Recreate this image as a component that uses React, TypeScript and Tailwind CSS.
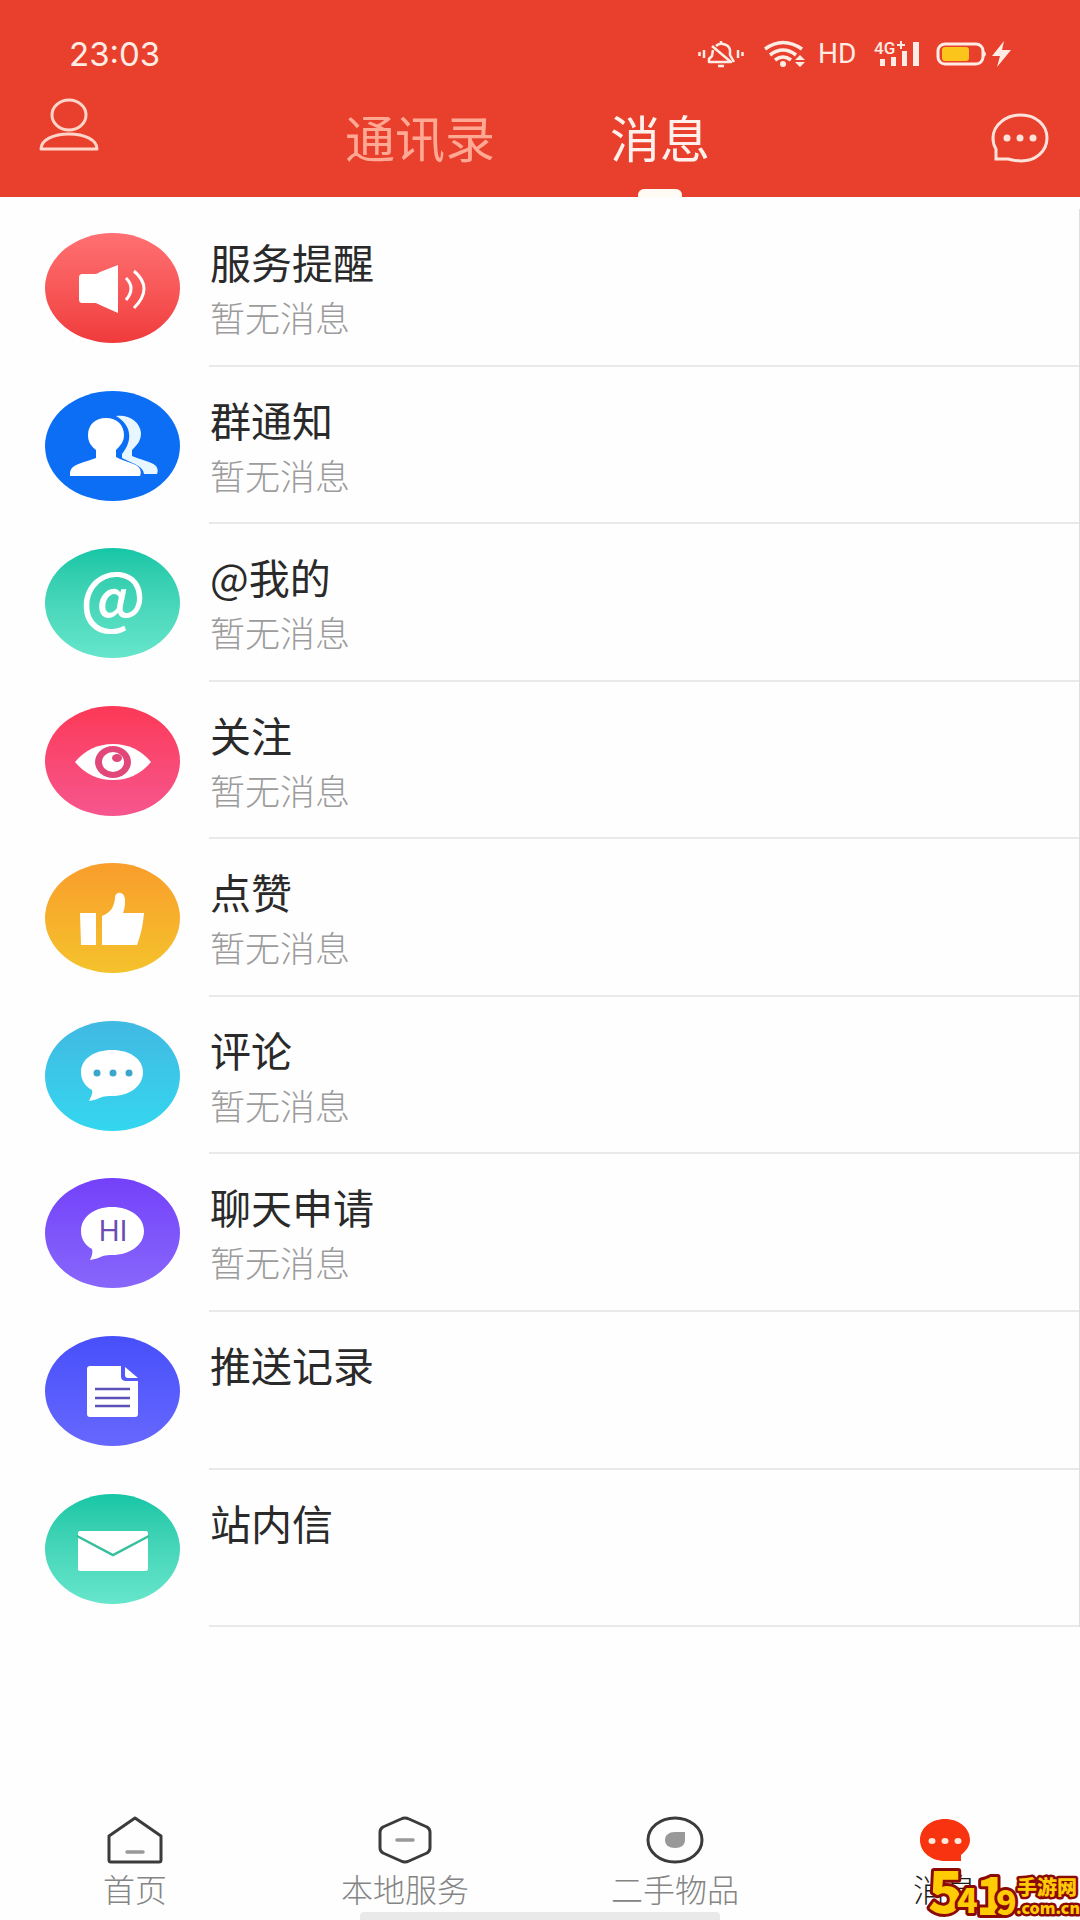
import type { ReactNode } from "react"

const EMPTY = "暂无消息"

const messages = [
  {
    title: "服务提醒",
    note: EMPTY,
    color: "from-[#ff7072] to-[#f03a3c]",
    visual: (
      <>
        <path d="M38 41h12c2 0 3-1 5-2l18-7v48l-18-8c-2-1-3-2-5-2H38c-3 0-4-1-4-4V45c0-3 1-4 4-4z" fill="white" />
        <path d="M81 45q10 10 0 22M89 38q20 17 0 37" fill="none" stroke="white" strokeWidth={3} />
      </>
    ),
  },
  {
    title: "群通知",
    note: EMPTY,
    color: "from-[#0c6ef5] to-[#0c6ef5]",
    visual: (
      <>
        <path d="M71 25c12-2 24 5 25 17 0 8-4 12-9 17v6c8 4 19 5 24 10 2 3 2 5 1 8h-13c-1-7-7-9-22-16v-4c11-13 10-29-6-38z" fill="#e8f6ff" />
        <path d="M61 27c11 0 18 7 18 17 0 7-4 11-8 15v7c9 5 21 6 24 12 1 3 1 5 0 7H25c0-4 0-6 3-9 5-4 13-5 23-9v-8c-5-4-8-8-8-15 0-10 7-17 18-17z" fill="white" />
      </>
    ),
  },
  {
    title: "@我的",
    note: EMPTY,
    color: "from-[#13c6a6] to-[#66e6cc]",
    visual: (
      <text x={68} y={74} textAnchor="middle" fontSize={68} fontWeight={500} fill="white">@</text>
    ),
  },
  {
    title: "关注",
    note: EMPTY,
    color: "from-[#fc3856] to-[#f6558e]",
    visual: (
      <>
        <path d="M30 56q15-18 38-18t38 18q-15 18-38 18T30 56z" fill="white" />
        <ellipse cx={68} cy={56} rx={18} ry={16} fill="#e2477a" />
        <ellipse cx={68} cy={56} rx={11} ry={10} fill="white" />
        <ellipse cx={72} cy={52} rx={5} ry={4} fill="#e2477a" />
      </>
    ),
  },
  {
    title: "点赞",
    note: EMPTY,
    color: "from-[#f99d2b] to-[#f4c22c]",
    visual: (
      <path d="M35 50h16v32H36zM57 82V53c8-3 12-8 13-18 0-7 9-7 10 1 0 5 0 9-2 14h21c-1 12-3 21-7 32z" fill="white" />
    ),
  },
  {
    title: "评论",
    note: EMPTY,
    color: "from-[#41b9e2] to-[#33d6f0]",
    visual: (
      <>
        <path d="M67 29c18 0 31 9 31 22 0 14-13 24-31 24-4 0-7 0-10 1-4 2-8 3-13 4 2-4 4-8 3-11-7-4-11-10-11-18 0-13 13-22 31-22z" fill="white" />
        <g fill="#3aa5cd">
          <circle cx={52} cy={52} r={3.5} />
          <circle cx={68} cy={52} r={3.5} />
          <circle cx={84} cy={52} r={3.5} />
        </g>
      </>
    ),
  },
  {
    title: "聊天申请",
    note: EMPTY,
    color: "from-[#7440fa] to-[#8866fb]",
    visual: (
      <>
        <path d="M67 29c18 0 32 10 32 24s-14 24-32 24c-3 0-6 0-9 1-4 2-8 3-13 4 2-4 3-8 2-11-7-4-11-10-11-18 0-14 13-24 31-24z" fill="white" />
        <text x={68} y={63} textAnchor="middle" fontSize={28} fontWeight={400} fill="#6d4bb5" className="font-['Inter',sans-serif]">HI</text>
      </>
    ),
  },
  {
    title: "推送记录",
    note: "",
    color: "from-[#474ffa] to-[#6767fd]",
    visual: (
      <>
        <path d="M45 30h31v10c0 4 2 5 6 5h11v33q0 3-3 3H45q-3 0-3-3V33q0-3 3-3z" fill="white" />
        <path d="M80 31l13 11H83q-3 0-3-3z" fill="white" />
        <path d="M50 53h35M50 62h35M50 70h35" stroke="#5a52b8" strokeWidth={2.5} />
      </>
    ),
  },
  {
    title: "站内信",
    note: "",
    color: "from-[#13c6a6] to-[#66e6cc]",
    visual: (
      <>
        <rect x={33} y={37} width={70} height={40} rx={2} fill="white" />
        <path d="M32 42l36 19 36-19" fill="none" stroke="#35bf9b" strokeWidth={2.5} />
      </>
    ),
  },
]

const navItems = [
  {
    label: "首页",
    active: false,
    icon: (
      <svg className="w-[58px] h-12" viewBox="0 0 58 48" fill="none" strokeLinecap="round" strokeLinejoin="round">
        <path d="M29 2L55 20v24q0 2-2 2H5q-2 0-2-2V20z" stroke="#3b3b3b" strokeWidth={3} />
        <path d="M21 36h16" stroke="#999" strokeWidth={3.5} />
      </svg>
    ),
  },
  {
    label: "本地服务",
    active: false,
    icon: (
      <svg className="w-[58px] h-12" viewBox="0 0 58 48" fill="none" strokeLinecap="round" strokeLinejoin="round">
        <path d="M25 3q4-2 8 0l18 8q3 2 3 5v16q0 3-3 5l-18 8q-4 2-8 0L7 37q-3-2-3-5V16q0-3 3-5z" stroke="#3b3b3b" strokeWidth={3} />
        <path d="M21 24h16" stroke="#999" strokeWidth={3.5} />
      </svg>
    ),
  },
  {
    label: "二手物品",
    active: false,
    icon: (
      <svg className="w-[58px] h-12" viewBox="0 0 58 48" fill="none">
        <ellipse cx={29} cy={24} rx={27} ry={22} stroke="#3b3b3b" strokeWidth={3} />
        <path d="M39 16v8c0 5-4 8-10 8s-10-3-10-8 4-8 10-8z" fill="#999" />
      </svg>
    ),
  },
  {
    label: "消息",
    active: true,
    icon: (
      <svg className="w-[58px] h-12" viewBox="0 0 58 48">
        <path d="M29 3c14 0 25 9 25 21 0 6-4 11-9 15v6H29C15 45 4 36 4 24S15 3 29 3z" fill="#f8330f" />
        <g fill="#ffe9dc">
          <ellipse cx={16} cy={25} rx={3.5} ry={3} />
          <ellipse cx={29} cy={25} rx={3.5} ry={3} />
          <ellipse cx={42} cy={25} rx={3.5} ry={3} />
        </g>
      </svg>
    ),
  },
]

function StatusBar() {
  return (
    <div className="flex items-center justify-between pt-[38px] pl-[69px] pr-[68px] text-[#ffece4] font-normal">
      <span className="font-['Inter',sans-serif] text-[33px] leading-8">23:03</span>
      <div className="flex items-center h-8">
        {/* Muted bell */}
        <svg className="w-[46px] h-7" viewBox="0 0 46 28" fill="none" stroke="currentColor" strokeWidth={2.5}>
          <path d="M1.500 12v4M6 10v8M40 10v8M44.500 12v4" />
          <path d="M15 10l-1 6-3 3v3h22L14 6M18 6c4-4 13-2 14 4v5l4 7" strokeLinejoin="round" />
          <path d="M23 1v3M20 26h6" />
        </svg>
        {/* Wifi */}
        <svg className="w-[42px] h-7 ml-5" viewBox="0 0 42 28" fill="none" stroke="currentColor" strokeWidth={3.5}>
          <path d="M1 9q18-13 37 0M6 15q13-10 26 0M11 20q8-6 16 0" />
          <circle cx={19} cy={24} r={3} fill="currentColor" stroke="none" />
          <path d="M31 20l5-5 5 5zM31 22l5 5 5-5z" fill="currentColor" stroke="none" />
        </svg>
        <span className="ml-3 w-10 font-['Roboto',sans-serif] text-[28px] leading-8">HD</span>
        {/* Mobile signal */}
        <svg className="w-[46px] h-7 ml-4 overflow-visible" viewBox="0 0 46 28" fill="currentColor">
          <text x={0} y={14} fontSize={17} fontWeight={500} className="font-['Roboto',sans-serif]">4G</text>
          <path d="M23 4h3V1h2v3h3v2h-3v3h-2V6h-3zM6 19h5v7H6zM17 17h5v9h-5zM28 11h5v15h-5zM39 2h6v24h-6z" />
        </svg>
        {/* Battery */}
        <svg className="w-[76px] h-7 ml-4" viewBox="0 0 76 28">
          <rect x={2} y={4} width={45} height={20} rx={7} fill="none" stroke="currentColor" strokeWidth={3} />
          <path d="M48 11q4 3 0 6z" fill="currentColor" />
          <rect x={6} y={7} width={27} height={14} rx={3} fill="#fbc51c" />
          <path d="M68 1L56 16h8l-3 11 14-17h-9z" fill="currentColor" />
        </svg>
      </div>
    </div>
  )
}

function Header() {
  return (
    <header className="bg-[#e8402d]">
      <StatusBar />
      <div className="grid grid-cols-[1fr_auto_1fr] h-[127px]">
        <button type="button" aria-label="个人中心" className="self-start justify-self-start mt-7 ml-[39px]">
          <svg className="w-[60px] h-[54px]" viewBox="0 0 60 54" fill="none" stroke="#ffd5c9" strokeWidth={3}>
            <ellipse cx={30} cy={17} rx={17} ry={15} />
            <path d="M2 51C2 42 14 36 30 36s28 6 28 15z" strokeLinejoin="round" />
          </svg>
        </button>
        <nav className="flex font-normal">
          <a href="#contacts" className="w-60 pt-[38px] text-center text-[50px] leading-[56px] text-[#ffa893]">
            通讯录
          </a>
          <a href="#messages" className="w-60 pt-[38px] flex flex-col items-center justify-between text-[50px] leading-[56px] text-[#fff0eb]">
            消息
            <span className="w-11 h-2 rounded-t-md bg-[#fffaf3]" />
          </a>
        </nav>
        <button type="button" aria-label="聊天" className="self-start justify-self-end mt-[43px] mr-[31px]">
          <svg className="w-[58px] h-[50px]" viewBox="0 0 58 50" fill="none" stroke="#ffe3da" strokeWidth={3}>
            <path d="M30 2c15 0 26 10 26 23S45 48 30 48c-5 0-8-1-13-2H5V36c-2-3-3-7-3-11C2 12 15 2 30 2z" />
            <g fill="#ffe3da" stroke="none">
              <circle cx={16} cy={25} r={3.5} />
              <circle cx={29} cy={25} r={3.5} />
              <circle cx={42} cy={25} r={3.5} />
            </g>
          </svg>
        </button>
      </div>
    </header>
  )
}

function MessageRow({ title, note, color, visual }: { title: string; note: string; color: string; visual: ReactNode }) {
  return (
    <li className="flex-1 flex">
      <a href="#message" className="flex-1 flex pl-[45px]">
        <span className={`mt-6 mb-[23px] w-[135px] h-[110px] shrink-0 rounded-[50%] bg-linear-to-b ${color}`}>
          <svg className="w-full h-full overflow-visible" viewBox="0 0 135 110">{visual}</svg>
        </span>
        <span className="ml-[29px] pt-6 pl-px flex-1 flex flex-col border-b-2 border-[#e9e9e9]">
          <span className="text-[41px] leading-[56px] font-normal text-[#2a2a2a]">{title}</span>
          <span className="text-[35px] leading-[56px] text-[#9c9c9c]">{note}</span>
        </span>
      </a>
    </li>
  )
}

function Watermark() {
  return (
    <svg
      className="absolute right-0 bottom-0 w-[154px] h-14 overflow-visible font-['Noto_Sans_CJK_SC',sans-serif]"
      viewBox="0 0 154 56"
      fill="#ffcb05"
      stroke="#8c0a05"
      strokeWidth={6}
      strokeLinejoin="round"
      paintOrder="stroke"
      fontWeight={900}
    >
      <text x={2} y={49} fontSize={58}>5</text>
      <text x={31} y={49} fontSize={34}>4</text>
      <text x={50} y={51} fontSize={52}>1</text>
      <text x={70} y={51} fontSize={34}>9</text>
      <text x={91} y={31} fontSize={20} strokeWidth={5}>手游网</text>
      <text x={90} y={50} fontSize={16} strokeWidth={5}>.com.cn</text>
    </svg>
  )
}

export default function App() {
  return (
    <div className="relative min-h-screen flex flex-col bg-[#fefefe] font-['Noto_Sans_CJK_SC',sans-serif] font-light">
      <Header />
      <main className="flex-1 flex flex-col pt-3 pb-[165px]">
        <ul className="flex-1 flex flex-col border-r border-[#dedede]">
          {messages.map((message) => (
            <MessageRow key={message.title} {...message} />
          ))}
        </ul>
      </main>
      <footer>
        <nav className="grid grid-cols-4 pt-6">
          {navItems.map((item) => (
            <a key={item.label} href="#nav" className="flex flex-col items-center gap-1">
              {item.icon}
              <span className={`mb-1 text-[32px] leading-10 ${item.active ? "text-[#1c1c1c]" : "text-[#858585]"}`}>
                {item.label}
              </span>
            </a>
          ))}
        </nav>
        <div className="mx-auto w-1/3 h-2 rounded-t bg-[#e9e9e9]" />
      </footer>
      <Watermark />
    </div>
  )
}
